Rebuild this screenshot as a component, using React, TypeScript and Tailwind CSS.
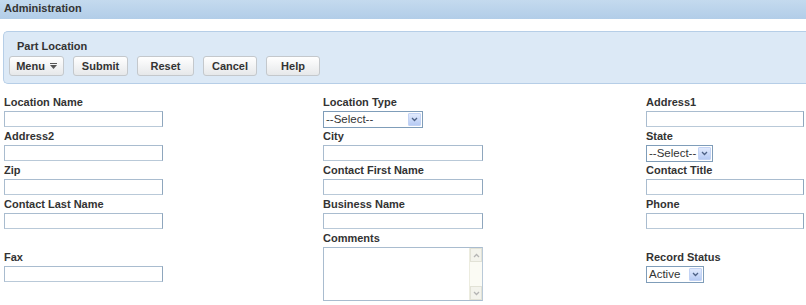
import React from 'react';

const font = "font-['Liberation_Sans',Arial,Helvetica,sans-serif]";

function Chevron({ className }: { className?: string }) {
  return (
    <svg width="7" height="5" viewBox="0 0 7 5" className={className}>
      <path d="M1 1 L3.5 3.5 L6 1" fill="none" stroke="currentColor" strokeWidth="1.3" />
    </svg>
  );
}

function Label({ children }: { children: React.ReactNode }) {
  return <div className="h-[16px] text-[11px] leading-[15px] font-bold text-[#333]">{children}</div>;
}

function TextInput({ width = 'w-[159px]' }: { width?: string }) {
  return <div className={`${width} h-[16px] border border-[#a9bccf] border-r-[#8ea6bd] border-b-[#b9c9d8] bg-white`} />;
}

function Select({ value, width }: { value: string; width: string }) {
  return (
    <div className={`${width} h-[17px] flex items-stretch border border-[#7f9db9] bg-white`}>
      <div className="flex-1 pl-[2px] text-[11.5px] leading-[15px] text-[#333] whitespace-nowrap">{value}</div>
      <div className="w-[13px] shrink-0 m-[1px] flex items-center justify-center rounded-[1px] border border-[#c3d3f4] bg-gradient-to-b from-[#e1eafd] to-[#b7cbf4] text-[#4d6185]">
        <Chevron />
      </div>
    </div>
  );
}

function Field({ label, children }: { label: string; children: React.ReactNode }) {
  return (
    <div className="h-[34px] flex flex-col">
      <Label>{label}</Label>
      {children}
    </div>
  );
}

function Button({ children, width }: { children: React.ReactNode; width: string }) {
  return (
    <div className={`${width} h-[20px] flex items-center justify-center gap-[5px] rounded-[3px] border border-[#c4c8cc] bg-gradient-to-b from-[#ffffff] to-[#e6e8ea] text-[11px] font-bold text-[#333]`}>
      {children}
    </div>
  );
}

function MenuGlyph() {
  return (
    <svg width="7" height="6" viewBox="0 0 7 6" className="text-[#555]">
      <rect x="0" y="0" width="7" height="1" fill="currentColor" />
      <path d="M0 2 L7 2 L3.5 6 Z" fill="currentColor" />
    </svg>
  );
}

function Comments() {
  return (
    <div className="w-[160px] h-[54px] flex border border-[#a9bccf] border-r-[#b9c9d8] bg-white">
      <div className="flex-1" />
      <div className="w-[13px] flex flex-col justify-between bg-[#fbfbf4] border-l border-[#ececdf]">
        <div className="h-[14px] flex items-center justify-center border border-[#e2e2d6] bg-[#f3f3ec] text-[#b4b4b4]">
          <Chevron className="rotate-180" />
        </div>
        <div className="h-[14px] flex items-center justify-center border border-[#e2e2d6] bg-[#f3f3ec] text-[#b4b4b4]">
          <Chevron />
        </div>
      </div>
    </div>
  );
}

export default function App() {
  return (
    <div className={`w-[806px] h-[305px] overflow-hidden bg-white ${font}`}>
      {/* Title bar */}
      <div className="h-[19px] px-[4px] bg-gradient-to-b from-[#c4daee] to-[#b2cde8] text-[11px] leading-[17px] font-bold text-[#333]">
        Administration
      </div>

      {/* Toolbar panel */}
      <div className="mt-[12px] ml-[3px] h-[53px] rounded-l-[5px] border border-r-0 border-[#b6cee7] bg-[#dce9f6]">
        <div className="pl-[13px] pt-[7px] h-[21px] text-[11px] leading-[14px] font-bold text-[#333]">Part Location</div>
        <div className="mt-[3px] pl-[5px] flex gap-[9px]">
          <Button width="w-[55px]">
            Menu <MenuGlyph />
          </Button>
          <Button width="w-[55px]">Submit</Button>
          <Button width="w-[57px]">Reset</Button>
          <Button width="w-[54px]">Cancel</Button>
          <Button width="w-[54px]">Help</Button>
        </div>
      </div>

      {/* Form */}
      <div className="mt-[11px] pl-[4px] grid grid-cols-[319px_323px_1fr]">
        <Field label="Location Name"><TextInput /></Field>
        <Field label="Location Type"><Select value="--Select--" width="w-[100px]" /></Field>
        <Field label="Address1"><TextInput width="w-[158px]" /></Field>

        <Field label="Address2"><TextInput /></Field>
        <Field label="City"><TextInput width="w-[160px]" /></Field>
        <Field label="State"><Select value="--Select--" width="w-[67px]" /></Field>

        <Field label="Zip"><TextInput /></Field>
        <Field label="Contact First Name"><TextInput width="w-[160px]" /></Field>
        <Field label="Contact Title"><TextInput width="w-[158px]" /></Field>

        <Field label="Contact Last Name"><TextInput /></Field>
        <Field label="Business Name"><TextInput width="w-[160px]" /></Field>
        <Field label="Phone"><TextInput width="w-[158px]" /></Field>

        <div className="self-center flex flex-col">
          <Label>Fax</Label>
          <TextInput />
        </div>
        <div className="flex flex-col">
          <Label>Comments</Label>
          <Comments />
        </div>
        <div className="self-center flex flex-col">
          <Label>Record Status</Label>
          <Select value="Active" width="w-[58px]" />
        </div>
      </div>
    </div>
  );
}
